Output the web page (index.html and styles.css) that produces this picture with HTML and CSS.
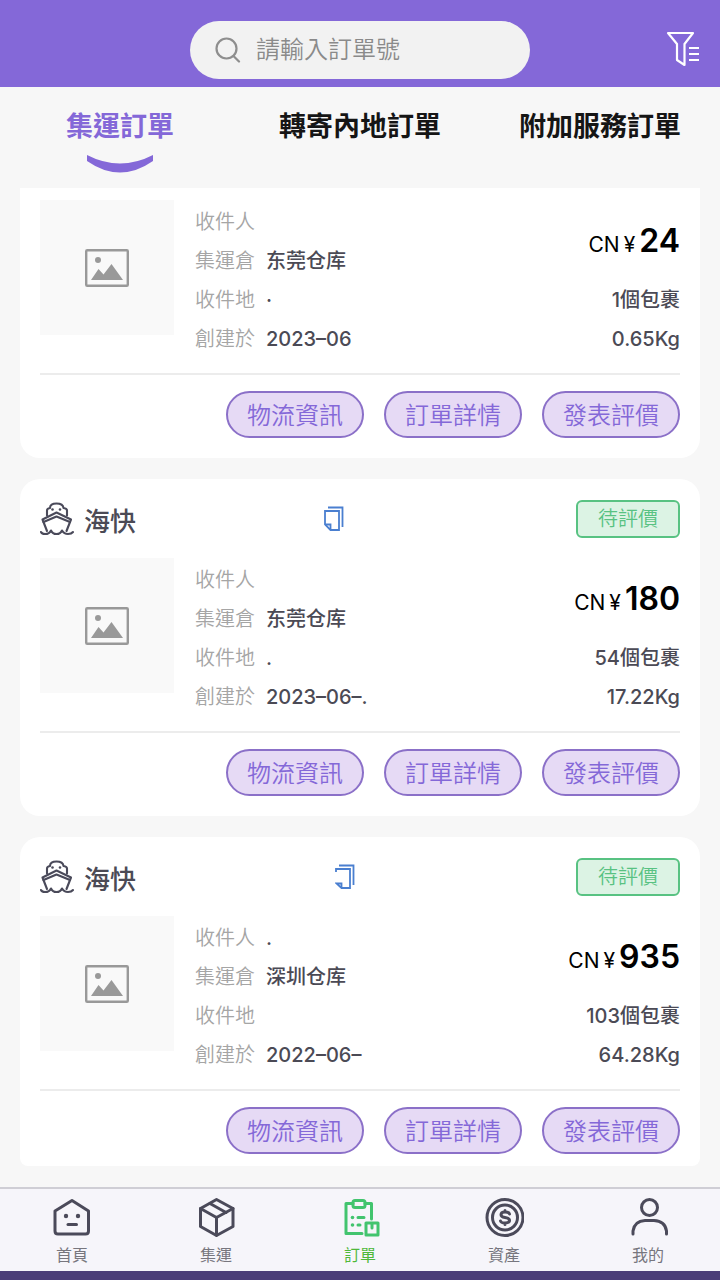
FILE: index.html
```html
<!DOCTYPE html>
<html lang="zh-Hant">
<head>
    <meta charset="UTF-8">
    <meta name="viewport" content="width=device-width, initial-scale=1.0">
    <title>集運訂單</title>
    <link rel="stylesheet" href="styles.css">
</head>
<body>

    <!-- 共用圖標 -->
    <svg class="symbols" aria-hidden="true">
        <symbol id="icon-picture" viewBox="0 0 44 38">
            <rect x="1.200" y="1.200" width="41.600" height="35.600" rx="1" fill="none" stroke="#999" stroke-width="2.400"/>
            <circle cx="13" cy="11" r="3" fill="#999"/>
            <path d="M6 31 L13.500 20 L18.500 25.500 L26.500 15 L38 31 Z" fill="#999"/>
        </symbol>
        <symbol id="icon-ship" viewBox="0 0 34 34">
            <g fill="none" stroke="#4a4a5a" stroke-width="2.100" stroke-linecap="round" stroke-linejoin="round">
                <path d="M7 13.500 V8.500 Q7 6.500 10 6 Q10 1.500 16.500 1.500 Q23 1.500 23.500 6 Q27 6.500 27 8.500 V13.500"/>
                <path d="M7 29 L2.500 17.500 L16.500 10.500 L31 17.500 L26.500 29"/>
                <path d="M3.500 20 L16.500 14.500 L30 20"/>
                <path d="M1 30 Q2 32 5 32 Q9.500 32 11 28.500 Q12.500 32 16.500 32 Q20.500 32 22 28.500 Q24 32 28 32 Q31.500 32 33 30"/>
            </g>
            <circle cx="12.500" cy="7.500" r="1.300" fill="#4a4a5a"/>
            <circle cx="20" cy="7.500" r="1.300" fill="#4a4a5a"/>
        </symbol>
        <symbol id="icon-copy" viewBox="0 0 20 26">
            <g fill="none" stroke="#4a7fd0" stroke-width="1.8">
                <path d="M1 5 H15 V24 H6.500 L1 18.500 Z"/>
                <path d="M1 18.500 H6.500 V24"/>
                <path d="M4 1.500 H18.500 V21"/>
            </g>
        </symbol>
        <symbol id="icon-copy-part" viewBox="0 0 20 26">
            <g fill="none" stroke="#4a7fd0" stroke-width="1.8">
                <path d="M1 8 V5 H15 V24 H6.500 L1.500 19.500 H6.500 V24"/>
                <path d="M4 1.500 H18.500 V21"/>
            </g>
        </symbol>
    </svg>

    <header class="header">
        <label class="search">
            <svg class="search-icon" viewBox="0 0 26 26" aria-hidden="true">
                <g fill="none" stroke="#8e8e8e" stroke-width="2.200" stroke-linecap="round">
                    <circle cx="11.500" cy="11.500" r="10"/>
                    <path d="M18.500 19 L24 24.500"/>
                </g>
            </svg>
            <input class="search-input" type="text" placeholder="請輸入訂單號" aria-label="請輸入訂單號">
        </label>
        <button class="filter" type="button" aria-label="篩選">
            <svg viewBox="0 0 34 36" aria-hidden="true">
                <g fill="none" stroke="#fff" stroke-width="2.200" stroke-linejoin="round">
                    <path d="M2 2 H27 L18.500 13 V34 L11 29 V13 Z"/>
                    <path d="M23 17 H33 M23 23 H33 M23 29 H33"/>
                </g>
            </svg>
        </button>
    </header>

    <nav class="tabs">
        <a class="tab active" href="#">集運訂單
            <svg class="smile" viewBox="0 0 66 18" aria-hidden="true">
                <path d="M0 0 Q33 17 66 0 V6 Q33 29 0 6 Z" fill="#8468d8"/>
            </svg>
        </a>
        <a class="tab" href="#">轉寄內地訂單</a>
        <a class="tab" href="#">附加服務訂單</a>
    </nav>

    <main class="list">
        <article class="card card-first">
            <div class="card-body">
                <div class="thumb"><svg><use href="#icon-picture"/></svg></div>
                <dl class="info">
                    <div class="row"><dt>收件人</dt><dd></dd></div>
                    <div class="row"><dt>集運倉</dt><dd>东莞仓库</dd></div>
                    <div class="row"><dt>收件地</dt><dd>·</dd></div>
                    <div class="row"><dt>創建於</dt><dd>2023–06</dd></div>
                </dl>
                <div class="summary">
                    <div class="price"><span class="currency">CN</span><span class="currency">¥</span>24</div>
                    <div class="row">1個包裹</div>
                    <div class="row">0.65Kg</div>
                </div>
            </div>
            <div class="actions">
                <button type="button">物流資訊</button>
                <button type="button">訂單詳情</button>
                <button type="button">發表評價</button>
            </div>
        </article>

        <article class="card">
            <div class="card-head">
                <svg class="ship"><use href="#icon-ship"/></svg>
                <h2>海快</h2>
                <button class="copy" type="button" aria-label="複製"><svg><use href="#icon-copy"/></svg></button>
                <span class="badge">待評價</span>
            </div>
            <div class="card-body">
                <div class="thumb"><svg><use href="#icon-picture"/></svg></div>
                <dl class="info">
                    <div class="row"><dt>收件人</dt><dd></dd></div>
                    <div class="row"><dt>集運倉</dt><dd>东莞仓库</dd></div>
                    <div class="row"><dt>收件地</dt><dd>.</dd></div>
                    <div class="row"><dt>創建於</dt><dd>2023–06–.</dd></div>
                </dl>
                <div class="summary">
                    <div class="price"><span class="currency">CN</span><span class="currency">¥</span>180</div>
                    <div class="row">54個包裹</div>
                    <div class="row">17.22Kg</div>
                </div>
            </div>
            <div class="actions">
                <button type="button">物流資訊</button>
                <button type="button">訂單詳情</button>
                <button type="button">發表評價</button>
            </div>
        </article>

        <article class="card card-last">
            <div class="card-head">
                <svg class="ship"><use href="#icon-ship"/></svg>
                <h2>海快</h2>
                <button class="copy copy-far" type="button" aria-label="複製"><svg><use href="#icon-copy-part"/></svg></button>
                <span class="badge">待評價</span>
            </div>
            <div class="card-body">
                <div class="thumb"><svg><use href="#icon-picture"/></svg></div>
                <dl class="info">
                    <div class="row"><dt>收件人</dt><dd>.</dd></div>
                    <div class="row"><dt>集運倉</dt><dd>深圳仓库</dd></div>
                    <div class="row"><dt>收件地</dt><dd></dd></div>
                    <div class="row"><dt>創建於</dt><dd>2022–06–</dd></div>
                </dl>
                <div class="summary">
                    <div class="price"><span class="currency">CN</span><span class="currency">¥</span>935</div>
                    <div class="row">103個包裹</div>
                    <div class="row">64.28Kg</div>
                </div>
            </div>
            <div class="actions">
                <button type="button">物流資訊</button>
                <button type="button">訂單詳情</button>
                <button type="button">發表評價</button>
            </div>
        </article>
    </main>

    <nav class="tabbar">
        <a class="tabbar-item" href="#">
            <svg viewBox="0 0 40 40" aria-hidden="true">
                <path d="M20 3.500 L36.500 14 V34 Q36.500 37 33.500 37 H6 Q3 37 3 34 V14 Z"/>
                <path d="M16 27.500 H24.500"/>
                <circle class="dot" cx="14" cy="19" r="2.200"/>
                <circle class="dot" cx="26" cy="19" r="2.200"/>
            </svg>
            首頁
        </a>
        <a class="tabbar-item" href="#">
            <svg viewBox="0 0 40 40" aria-hidden="true">
                <path d="M20.500 2.500 L37 11.500 V29.500 L20.500 38.500 L4.500 29.500 V11.500 Z"/>
                <path d="M4.500 11.500 L20.500 20.500 L37 11.500 M20.500 20.500 V38"/>
                <path d="M14 6.500 L30 15.500"/>
            </svg>
            集運
        </a>
        <a class="tabbar-item active" href="#">
            <svg viewBox="0 0 40 40" aria-hidden="true">
                <path d="M13 6.500 H6 V36.500 H22 M25 6.500 H31.500 V22"/>
                <rect x="13" y="3.500" width="12" height="7" rx="2"/>
                <path d="M18 20.500 H24 M18 28 H20"/>
                <rect x="26" y="26" width="12" height="12"/>
                <path d="M32 27 V31"/>
                <circle class="dot" cx="12.500" cy="20.500" r="1.800"/>
                <circle class="dot" cx="12.500" cy="28" r="1.800"/>
            </svg>
            訂單
        </a>
        <a class="tabbar-item" href="#">
            <svg viewBox="0 0 40 40" aria-hidden="true">
                <circle cx="21" cy="20.500" r="18"/>
                <circle cx="21" cy="20.500" r="12.500"/>
                <path d="M25.500 17 Q25 15 21 15 Q17 15 17 17.800 Q17 20 21 20.500 Q25.500 21 25.500 23.500 Q25.500 26 21 26 Q17 26 16.500 24 M21 13.500 V15 M21 26 V27.500"/>
            </svg>
            資產
        </a>
        <a class="tabbar-item" href="#">
            <svg viewBox="0 0 40 40" aria-hidden="true">
                <circle cx="21.500" cy="10.500" r="8"/>
                <path d="M5 37 V34 Q6.500 24 17 23.500 H26 Q37 24 38.500 34 V37"/>
            </svg>
            我的
        </a>
    </nav>
    <div class="bottom-strip"></div>

</body>
</html>
```

FILE: styles.css
```css
* {
    box-sizing: border-box;
}

body {
    display: flex;
    flex-direction: column;
    min-height: 100vh;
    margin: 0;
    background-color: #f7f7f7;
    color: #4b4a55;
    font-family: Inter, "Noto Sans CJK TC", sans-serif;
    font-size: 20px;
}

a {
    color: inherit;
    text-decoration: none;
}

button {
    padding: 0;
    border: none;
    background: none;
    font-family: inherit;
    cursor: pointer;
}

svg {
    display: block;
}

.symbols {
    display: none;
}

.header {
    display: grid;
    grid-template-columns: 1fr 50% 1fr;
    align-items: center;
    height: 87px;
    padding: 12px 20px 0;
    background-color: #8468d8;
}

.search {
    grid-column: 2;
    display: flex;
    align-items: center;
    gap: 15px;
    height: 58px;
    padding: 0 25px;
    border-radius: 29px;
    background-color: #f2f2f2;
}

.search-icon {
    flex: none;
    width: 26px;
    height: 26px;
}

.search-input {
    flex: 1;
    min-width: 0;
    padding: 0;
    border: none;
    outline: none;
    background: none;
    font-family: inherit;
    font-size: 24px;
    font-weight: 350;
}

.search-input::placeholder {
    color: #8a8a8a;
}

.filter {
    justify-self: end;
    margin-bottom: 2px;
}

.filter svg {
    width: 34px;
    height: 36px;
}

.tabs {
    display: grid;
    grid-template-columns: repeat(3, 1fr);
    height: 101px;
    padding-top: 20px;
}

.tab {
    display: flex;
    flex-direction: column;
    align-items: center;
    gap: 8px;
    color: #151515;
    font-size: 27px;
    font-weight: 600;
    line-height: 40px;
}

.tab.active {
    color: #8468d8;
}

.smile {
    width: 66px;
    height: 18px;
}

.list {
    display: flex;
    flex-direction: column;
    gap: 21px;
    padding: 0 20px 20px;
}

.card {
    padding: 20px;
    border-radius: 20px;
    background-color: #fff;
}

.card-first {
    padding-top: 12px;
    border-radius: 0 0 20px 20px;
}

.card-last {
    padding-bottom: 12px;
    border-radius: 20px 20px 8px 8px;
}

.card-head {
    display: flex;
    align-items: center;
    height: 40px;
    margin-bottom: 19px;
}

.card-head h2 {
    margin: 0 0 0 10px;
    font-size: 26px;
    font-weight: 500;
}

.ship {
    width: 34px;
    height: 34px;
}

.copy {
    margin-left: 188px;
}

.copy-far {
    margin-left: 199px;
}

.copy svg {
    width: 20px;
    height: 26px;
}

.badge {
    margin-left: auto;
    padding: 0 20px;
    border: 2px solid #58c282;
    border-radius: 6px;
    background-color: #dcf3e4;
    color: #58c282;
    font-weight: 350;
    line-height: 34px;
}

.card-body {
    display: flex;
    gap: 21px;
    padding-bottom: 14px;
    border-bottom: 2px solid #ececec;
}

.thumb {
    display: flex;
    align-items: center;
    justify-content: center;
    width: 134px;
    height: 135px;
    background-color: #f9f9f9;
}

.thumb svg {
    width: 44px;
    height: 38px;
}

.info {
    flex: 1;
    margin: 3px 0 0;
}

.row {
    display: flex;
    gap: 11px;
    height: 39px;
    font-weight: 500;
    line-height: 39px;
}

.row dt {
    color: #a5a5a5;
    font-weight: 350;
}

.row dd {
    margin: 0;
}

.summary {
    display: flex;
    flex-direction: column;
    align-items: flex-end;
    margin-top: 3px;
}

.price {
    display: flex;
    align-items: baseline;
    gap: 4px;
    height: 78px;
    color: #000;
    font-size: 32px;
    font-weight: 600;
    line-height: 76px;
}

.currency {
    font-size: 21px;
    font-weight: 400;
}

.actions {
    display: flex;
    justify-content: flex-end;
    gap: 20px;
    margin-top: 16px;
}

.actions button {
    width: 138px;
    height: 47px;
    padding-bottom: 3px;
    border: 2px solid #8b70c8;
    border-radius: 24px;
    background-color: #e6daf5;
    color: #8468d8;
    font-size: 24px;
    font-weight: 350;
}

.tabbar {
    display: grid;
    grid-template-columns: repeat(5, 1fr);
    height: 84px;
    margin-top: auto;
    padding-top: 8px;
    border-top: 2px solid #cfced5;
    background-color: #f6f5fa;
}

.tabbar-item {
    display: flex;
    flex-direction: column;
    align-items: center;
    gap: 6px;
    color: #77767e;
    font-size: 16px;
    line-height: 24px;
}

.tabbar-item svg {
    width: 40px;
    height: 40px;
    fill: none;
    stroke: #4b4a5a;
    stroke-width: 3;
    stroke-linecap: round;
    stroke-linejoin: round;
}

.tabbar-item .dot {
    fill: #4b4a5a;
    stroke: none;
}

.tabbar-item.active {
    color: #4fb83a;
}

.tabbar-item.active svg {
    stroke: #42c46e;
}

.tabbar-item.active .dot {
    fill: #42c46e;
}

.bottom-strip {
    height: 9px;
    background-color: #4b3d78;
}
```
